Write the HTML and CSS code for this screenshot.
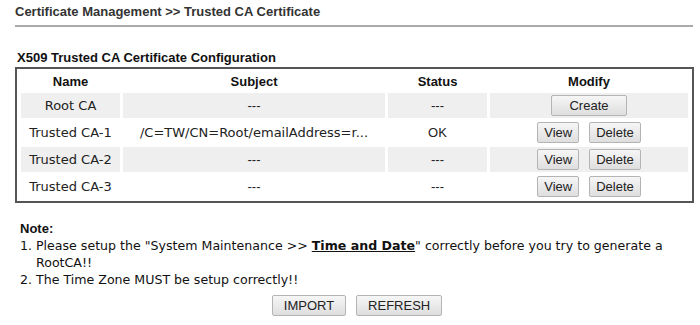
FILE: index.html
```html
<!DOCTYPE html>
<html lang="en">
<head>
    <meta charset="UTF-8">
    <title>Trusted CA Certificate</title>
    <link rel="stylesheet" href="styles.css">
</head>
<body>

    <div class="page-title">Certificate Management &gt;&gt; Trusted CA Certificate</div>

    <div class="section-title">X509 Trusted CA Certificate Configuration</div>

    <table class="ca-table">
        <tr>
            <th class="col-name">Name</th>
            <th class="col-subject">Subject</th>
            <th class="col-status">Status</th>
            <th class="col-modify">Modify</th>
        </tr>
        <tr class="shaded">
            <td class="name">Root CA</td>
            <td>---</td>
            <td>---</td>
            <td><button class="btn btn-create">Create</button></td>
        </tr>
        <tr>
            <td class="name">Trusted CA-1</td>
            <td class="name">/C=TW/CN=Root/emailAddress=r...</td>
            <td>OK</td>
            <td><button class="btn">View</button><button class="btn">Delete</button></td>
        </tr>
        <tr class="shaded">
            <td class="name">Trusted CA-2</td>
            <td>---</td>
            <td>---</td>
            <td><button class="btn">View</button><button class="btn">Delete</button></td>
        </tr>
        <tr>
            <td class="name">Trusted CA-3</td>
            <td>---</td>
            <td>---</td>
            <td><button class="btn">View</button><button class="btn">Delete</button></td>
        </tr>
    </table>

    <div class="note">
        <b>Note:</b>
        <ol>
            <li>Please setup the "System Maintenance &gt;&gt; <a href="#">Time and Date</a>" correctly before you try to generate a RootCA!!</li>
            <li>The Time Zone MUST be setup correctly!!</li>
        </ol>
    </div>

    <div class="actions">
        <button class="btn btn-wide">IMPORT</button>
        <button class="btn btn-wide">REFRESH</button>
    </div>

</body>
</html>
```

FILE: styles.css
```css
body {
    margin: 0;
    padding: 0 7px 0 15px;
    font-family: "Liberation Sans", Arial, sans-serif;
    font-size: 13px;
    color: #222;
    background-color: #fff;
}

.page-title {
    font-weight: bold;
    font-size: 13px;
    color: #333;
    padding: 4px 0 6px;
    border-bottom: 2px solid #aaa;
}

.section-title {
    font-weight: bold;
    margin: 23px 0 0 2px;
    color: #111;
}

.ca-table {
    width: 678px;
    margin-top: 2px;
    table-layout: fixed;
    border: 2px solid #555;
    border-spacing: 3px 2px;
    padding: 0 1px;
    text-align: center;
}

.ca-table th {
    height: 20px;
    padding: 0;
    font-weight: bold;
    color: #111;
}

.col-name { width: 99px; }
.col-subject { width: 262px; }
.col-status { width: 99px; }
.col-modify { width: 198px; }

.ca-table td {
    height: 25px;
    padding: 0;
    white-space: nowrap;
}

.ca-table td.name {
    font-family: "DejaVu Sans", Tahoma, sans-serif;
    font-size: 13px;
    color: #222;
}

.ca-table tr.shaded td {
    background-color: #efefef;
}

.btn {
    font-family: "Liberation Sans", Arial, sans-serif;
    font-size: 13px;
    color: #222;
    height: 21px;
    padding: 0 6px;
    margin: 0 5px;
    border: 1px solid #b4b4b4;
    border-radius: 2px;
    background: linear-gradient(#f6f6f6, #dedede);
}

.btn-create {
    width: 76px;
}

.note {
    margin: 17px 0 0 5px;
    font-family: "DejaVu Sans", Tahoma, sans-serif;
    font-size: 12.6px;
    line-height: 17px;
    color: #111;
}

.note b {
    font-family: "Liberation Sans", Arial, sans-serif;
    font-size: 13px;
}

.note ol {
    margin: 0;
    padding-left: 16px;
}

.note a {
    color: #111;
    font-weight: bold;
    text-decoration: underline;
}

.actions {
    display: flex;
    justify-content: center;
    margin-top: 7px;
    padding-left: 6px;
}

.btn-wide {
    height: 21px;
    padding: 0 11px;
}
```
